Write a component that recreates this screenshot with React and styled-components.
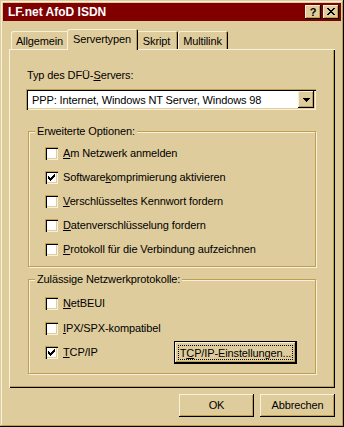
import React from 'react';
import styled, { createGlobalStyle } from 'styled-components';

const C = {
  face: '#DFCC9C',
  hi: '#F8F0D8',
  shadow: '#BE9E50',
  dark: '#000000',
  title: '#800000',
};

const Global = createGlobalStyle`
  html, body { margin: 0; padding: 0; background: ${C.face}; }
  body {
    font-family: "Liberation Sans", Arial, sans-serif;
    font-size: 11px;
    letter-spacing: -0.12px;
    color: #000;
  }
  * { box-sizing: border-box; }
`;

const Window = styled.div`
  width: 344px;
  height: 427px;
  background: ${C.face};
  padding: 3px;
  box-shadow: inset -1px -1px 0 ${C.dark}, inset 1px 1px 0 ${C.face},
    inset -2px -2px 0 ${C.shadow}, inset 2px 2px 0 ${C.hi};
  display: flex;
  flex-direction: column;
`;

const TitleBar = styled.div`
  height: 18px;
  flex: none;
  background: ${C.title};
  display: flex;
  align-items: center;
  padding: 0 2px 0 5px;
`;

const TitleText = styled.span`
  flex: 1;
  color: #fff;
  font-weight: bold;
  font-size: 12px;
  letter-spacing: 0;
  white-space: nowrap;
`;

const CapButton = styled.div`
  width: 16px;
  height: 14px;
  margin-left: ${(p) => p.$gap || 0}px;
  background: ${C.face};
  box-shadow: inset -1px -1px 0 ${C.dark}, inset 1px 1px 0 ${C.hi},
    inset -2px -2px 0 ${C.shadow};
  display: flex;
  align-items: center;
  justify-content: center;
  font-weight: bold;
  font-size: 11px;
  line-height: 14px;
  padding-bottom: 1px;
`;

const Body = styled.div`
  flex: 1;
  display: flex;
  flex-direction: column;
  padding: 8px 6px 7px 6px;
`;

const TabRow = styled.div`
  height: 20px;
  flex: none;
  display: flex;
  align-items: flex-end;
  padding-left: 2px;
`;

const Tab = styled.div`
  position: relative;
  z-index: ${(p) => (p.$active ? 2 : 1)};
  width: ${(p) => p.$w + (p.$active ? 4 : 0)}px;
  height: ${(p) => (p.$active ? 21 : 18)}px;
  margin: 0 ${(p) => (p.$active ? -2 : 0)}px ${(p) => (p.$active ? -1 : 0)}px;
  background: ${C.face};
  border-radius: 2px 2px 0 0;
  box-shadow: inset 1px 1px 0 ${C.hi}, inset -1px 0 0 ${C.dark},
    inset -2px 0 0 ${C.shadow};
  display: flex;
  align-items: center;
  justify-content: center;
  padding: ${(p) => (p.$active ? '0 1px 1px 0' : '1px 1px 0 0')};
  white-space: nowrap;
`;

const Panel = styled.div`
  height: 339px;
  flex: none;
  padding: 20px 19px 0 17px;
  box-shadow: inset 1px 1px 0 ${C.hi}, inset -1px -1px 0 ${C.dark},
    inset -2px -2px 0 ${C.shadow};
  display: flex;
  flex-direction: column;
`;

const FieldLabel = styled.div`
  line-height: 13px;
  height: 13px;
  padding-left: 1px;
  margin-bottom: 7px;
`;

const U = styled.span`
  text-decoration: underline;
  text-underline-offset: 1px;
`;

const Combo = styled.div`
  height: 21px;
  flex: none;
  margin-bottom: 21px;
  background: #fff;
  padding: 2px;
  box-shadow: inset 1px 1px 0 ${C.shadow}, inset 2px 2px 0 ${C.dark},
    inset -1px -1px 0 ${C.hi}, inset -2px -2px 0 ${C.face};
  display: flex;
  align-items: stretch;
`;

const ComboText = styled.div`
  flex: 1;
  display: flex;
  align-items: center;
  padding-left: 4px;
  white-space: nowrap;
`;

const ComboButton = styled.div`
  width: 16px;
  flex: none;
  background: ${C.face};
  box-shadow: inset -1px -1px 0 ${C.dark}, inset 1px 1px 0 ${C.hi},
    inset -2px -2px 0 ${C.shadow};
  display: flex;
  align-items: center;
  justify-content: center;
`;

const Group = styled.div`
  position: relative;
  margin-left: 2px;
  margin-top: ${(p) => p.$mt || 0}px;
  border: 1px solid ${C.shadow};
  box-shadow: inset 1px 1px 0 ${C.hi}, 1px 1px 0 ${C.hi};
  padding: ${(p) => p.$pad};
  display: flex;
  flex-direction: column;
`;

const Legend = styled.span`
  position: absolute;
  top: -7px;
  left: 6px;
  padding: 0 2px;
  line-height: 13px;
  background: ${C.face};
  white-space: nowrap;
`;

const Row = styled.div`
  height: ${(p) => p.$h}px;
  display: flex;
  align-items: center;
`;

const CheckBox = styled.span`
  width: 13px;
  height: 13px;
  flex: none;
  background: #fff;
  box-shadow: inset 1px 1px 0 ${C.shadow}, inset 2px 2px 0 ${C.dark},
    inset -1px -1px 0 ${C.hi}, inset -2px -2px 0 ${C.face};
  svg { display: block; }
`;

const CheckLabel = styled.span`
  margin-left: 5px;
  white-space: nowrap;
  line-height: 13px;
`;

const Button = styled.div`
  width: ${(p) => p.$w || 75}px;
  height: 23px;
  flex: none;
  background: ${C.face};
  box-shadow: inset -1px -1px 0 ${C.dark}, inset 1px 1px 0 ${C.hi},
    inset -2px -2px 0 ${C.shadow}, inset 2px 2px 0 ${C.face};
  display: flex;
  align-items: center;
  justify-content: center;
  white-space: nowrap;
  padding-bottom: 1px;
`;

const DefaultButton = styled.div`
  width: ${(p) => p.$w}px;
  height: 23px;
  flex: none;
  margin-left: auto;
  margin-right: 18px;
  background: ${C.face};
  border: 1px solid ${C.dark};
  box-shadow: inset -1px -1px 0 ${C.dark}, inset 1px 1px 0 ${C.hi},
    inset -2px -2px 0 ${C.shadow};
  display: flex;
  align-items: stretch;
`;

const Focus = styled.span`
  flex: 1;
  margin: 3px;
  border: 1px dotted ${C.dark};
  display: flex;
  align-items: center;
  justify-content: center;
  white-space: nowrap;
`;

const ButtonRow = styled.div`
  margin-top: 6px;
  display: flex;
  justify-content: flex-end;
  gap: 6px;
`;

const px = (rows, ox, oy) =>
  rows
    .map(([y, x0, x1]) => `M${ox + x0} ${oy + y}h${x1 - x0 + 1}v1h-${x1 - x0 + 1}z`)
    .join('');

const checkPath = px(
  [
    [0, 6, 6],
    [1, 5, 6],
    [2, 0, 0], [2, 4, 6],
    [3, 0, 1], [3, 3, 5],
    [4, 0, 4],
    [5, 1, 3],
    [6, 2, 2],
  ],
  3,
  3
);

const closePath = px(
  [
    [0, 0, 1], [0, 6, 7],
    [1, 1, 2], [1, 5, 6],
    [2, 2, 5],
    [3, 3, 4],
    [4, 2, 5],
    [5, 1, 2], [5, 5, 6],
    [6, 0, 1], [6, 6, 7],
  ],
  0,
  0
);

const arrowPath = px(
  [
    [0, 0, 6],
    [1, 1, 5],
    [2, 2, 4],
    [3, 3, 3],
  ],
  0,
  0
);

function Check({ checked, children }) {
  return (
    <>
      <CheckBox>
        {checked && (
          <svg width="13" height="13" viewBox="0 0 13 13" shapeRendering="crispEdges">
            <path d={checkPath} fill="#000" />
          </svg>
        )}
      </CheckBox>
      <CheckLabel>{children}</CheckLabel>
    </>
  );
}

export default function App() {
  return (
    <>
      <Global />
      <Window>
        <TitleBar>
          <TitleText>LF.net AfoD ISDN</TitleText>
          <CapButton>?</CapButton>
          <CapButton $gap={2}>
            <svg width="8" height="7" viewBox="0 0 8 7" shapeRendering="crispEdges">
              <path d={closePath} fill="#000" />
            </svg>
          </CapButton>
        </TitleBar>
        <Body>
          <TabRow>
            <Tab $w={58}>Allgemein</Tab>
            <Tab $w={67} $active>Servertypen</Tab>
            <Tab $w={42}>Skript</Tab>
            <Tab $w={50}>Multilink</Tab>
          </TabRow>
          <Panel>
            <FieldLabel>
              Typ des DFÜ-<U>S</U>ervers:
            </FieldLabel>
            <Combo>
              <ComboText>PPP: Internet, Windows NT Server, Windows 98</ComboText>
              <ComboButton>
                <svg width="7" height="4" viewBox="0 0 7 4" shapeRendering="crispEdges">
                  <path d={arrowPath} fill="#000" />
                </svg>
              </ComboButton>
            </Combo>
            <Group $pad="9px 0 5px 16px">
              <Legend>Erweiterte Optionen:</Legend>
              <Row $h={24}>
                <Check>
                  <U>A</U>m Netzwerk anmelden
                </Check>
              </Row>
              <Row $h={24}>
                <Check checked>
                  Software<U>k</U>omprimierung aktivieren
                </Check>
              </Row>
              <Row $h={24}>
                <Check>
                  <U>V</U>erschlüsseltes Kennwort fordern
                </Check>
              </Row>
              <Row $h={24}>
                <Check>
                  <U>D</U>atenverschlüsselung fordern
                </Check>
              </Row>
              <Row $h={24}>
                <Check>
                  <U>P</U>rotokoll für die Verbindung aufzeichnen
                </Check>
              </Row>
            </Group>
            <Group $mt={12} $pad="11px 0 9px 16px">
              <Legend>Zulässige Netzwerkprotokolle:</Legend>
              <Row $h={25}>
                <Check>
                  <U>N</U>etBEUI
                </Check>
              </Row>
              <Row $h={25}>
                <Check>
                  <U>I</U>PX/SPX-kompatibel
                </Check>
              </Row>
              <Row $h={23}>
                <Check checked>
                  <U>T</U>CP/IP
                </Check>
                <DefaultButton $w={123}>
                  <Focus>
                    T<U>C</U>P/IP-Einstellungen...
                  </Focus>
                </DefaultButton>
              </Row>
            </Group>
          </Panel>
          <ButtonRow>
            <Button>OK</Button>
            <Button>Abbrechen</Button>
          </ButtonRow>
        </Body>
      </Window>
    </>
  );
}
